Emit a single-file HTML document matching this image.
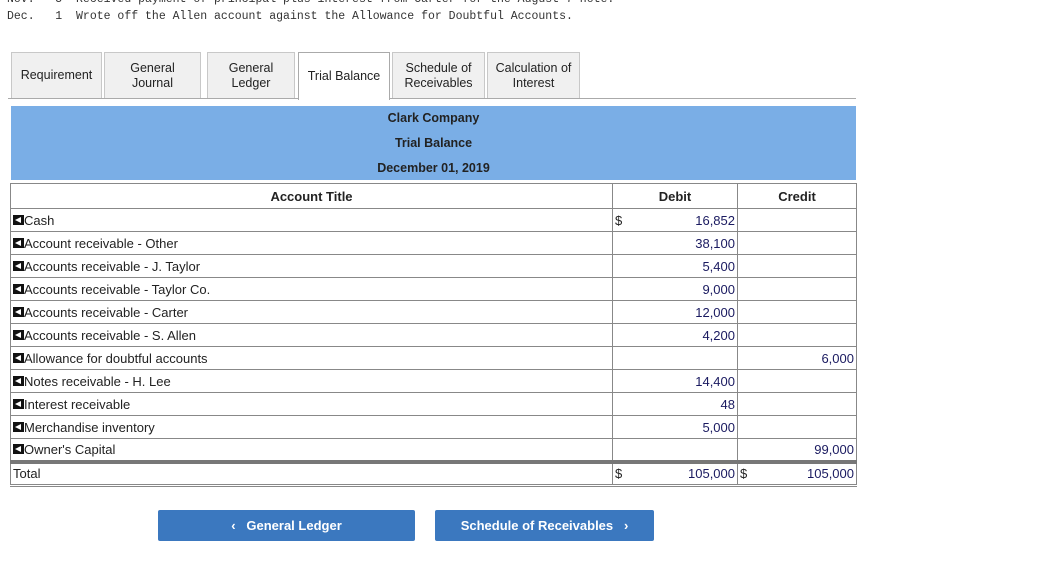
<html><head><style>
body{margin:0;width:1053px;height:573px;background:#fff;position:relative;font-family:"Liberation Sans",sans-serif;overflow:hidden}
.mono{position:absolute;left:7px;font-family:"Liberation Mono",monospace;font-size:11.5px;color:#333;white-space:pre}
.tab{position:absolute;top:52px;height:46px;border:1px solid #c8c8c8;border-bottom:none;background:#f0f0f0;font-size:12.5px;color:#222;display:flex;align-items:center;justify-content:center;text-align:center;line-height:15px;box-sizing:border-box}
.hdr{position:absolute;left:11px;top:106px;width:845px;height:74px;background:#7aaee6;text-align:center;font-size:12.5px;font-weight:bold;color:#222}
table{position:absolute;left:10px;top:183px;border-collapse:collapse;font-size:13px;table-layout:fixed}
td{border:1px solid #888;height:23px;padding:0 2px;color:#222;box-sizing:border-box}
td.n{text-align:right;color:#1a1a60}
td.d{border-right:none}
td.dn{border-left:none}
.ic{display:inline-block;width:11px;height:10px;background:#111;vertical-align:top;margin-top:2px;position:relative}
.ic:after{content:"";position:absolute;left:2px;top:2px;border-right:6px solid #fff;border-top:3px solid transparent;border-bottom:3px solid transparent}
.btn{position:absolute;top:510px;height:31px;background:#3b78bf;color:#fff;font-weight:bold;font-size:13px;display:flex;align-items:center;justify-content:center;border-radius:2px}
.t td{border-top:4px solid #777;border-bottom:3px double #888;height:24px}
</style></head><body>
<div class="mono" style="top:-7px">Nov.   5  Received payment of principal plus interest from Carter for the August 7 note.</div>
<div class="mono" style="top:10px">Dec.   1  Wrote off the Allen account against the Allowance for Doubtful Accounts.</div>
<div style="position:absolute;left:8px;top:98px;width:848px;border-top:1px solid #aaa"></div>
<div class="tab" style="left:11px;width:91px">Requirement</div>
<div class="tab" style="left:104px;width:97px">General<br>Journal</div>
<div class="tab" style="left:207px;width:88px">General<br>Ledger</div>
<div class="tab" style="left:298px;width:92px;height:48px;background:#fff;border-color:#aaa">Trial Balance</div>
<div class="tab" style="left:392px;width:93px">Schedule of<br>Receivables</div>
<div class="tab" style="left:487px;width:93px">Calculation of<br>Interest</div>
<div class="hdr"><div style="position:absolute;top:5px;width:100%">Clark Company</div><div style="position:absolute;top:30px;width:100%">Trial Balance</div><div style="position:absolute;top:55px;width:100%">December 01, 2019</div></div>
<table>
<colgroup><col style="width:602px"><col style="width:22px"><col style="width:103px"><col style="width:20px"><col style="width:99px"></colgroup>
<tr><td style="text-align:center;font-weight:bold;height:25px">Account Title</td><td colspan="2" style="text-align:center;font-weight:bold">Debit</td><td colspan="2" style="text-align:center;font-weight:bold">Credit</td></tr>
<tr><td><span class="ic"></span>Cash</td><td class="d">$</td><td class="n dn">16,852</td><td colspan="2"></td></tr>
<tr><td><span class="ic"></span>Account receivable - Other</td><td colspan="2" class="n">38,100</td><td colspan="2"></td></tr>
<tr><td><span class="ic"></span>Accounts receivable - J. Taylor</td><td colspan="2" class="n">5,400</td><td colspan="2"></td></tr>
<tr><td><span class="ic"></span>Accounts receivable - Taylor Co.</td><td colspan="2" class="n">9,000</td><td colspan="2"></td></tr>
<tr><td><span class="ic"></span>Accounts receivable - Carter</td><td colspan="2" class="n">12,000</td><td colspan="2"></td></tr>
<tr><td><span class="ic"></span>Accounts receivable - S. Allen</td><td colspan="2" class="n">4,200</td><td colspan="2"></td></tr>
<tr><td><span class="ic"></span>Allowance for doubtful accounts</td><td colspan="2"></td><td colspan="2" class="n">6,000</td></tr>
<tr><td><span class="ic"></span>Notes receivable - H. Lee</td><td colspan="2" class="n">14,400</td><td colspan="2"></td></tr>
<tr><td><span class="ic"></span>Interest receivable</td><td colspan="2" class="n">48</td><td colspan="2"></td></tr>
<tr><td><span class="ic"></span>Merchandise inventory</td><td colspan="2" class="n">5,000</td><td colspan="2"></td></tr>
<tr><td><span class="ic"></span>Owner's Capital</td><td colspan="2"></td><td colspan="2" class="n">99,000</td></tr>
<tr class="t"><td>Total</td><td class="d">$</td><td class="n dn">105,000</td><td class="d">$</td><td class="n dn">105,000</td></tr>
</table>
<div class="btn" style="left:158px;width:257px">&lsaquo;&nbsp;&nbsp;&nbsp;General Ledger</div>
<div class="btn" style="left:435px;width:219px">Schedule of Receivables&nbsp;&nbsp;&nbsp;&rsaquo;</div>
</body></html>
